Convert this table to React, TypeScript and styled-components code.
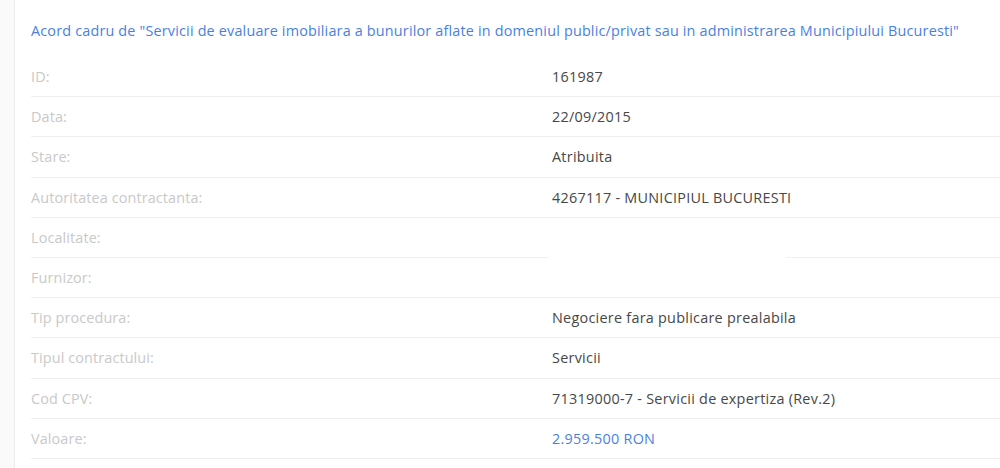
import React from "react";
import styled, { createGlobalStyle } from "styled-components";

const Global = createGlobalStyle`
  html, body { margin: 0; padding: 0; background: #fafafa; }
  body { font-family: "Open Sans", "Noto Sans", "DejaVu Sans", sans-serif; }
`;

const Page = styled.div`
  width: 1000px;
  height: 468px;
  overflow: hidden;
  display: flex;
  background: #fafafa;
`;

const Gutter = styled.div`
  width: 14px;
  flex: none;
`;

const Panel = styled.div`
  flex: 1;
  background: #ffffff;
  border-left: 1px solid #ececec;
  padding: 20px 0 0 16px;
`;

const Title = styled.h1`
  margin: 0 0 15px 0;
  font-size: 14.4px;
  letter-spacing: 0.18px;
  line-height: 22px;
  font-weight: 400;
  color: #4a7fdf;
  white-space: nowrap;
`;

const Grid = styled.div`
  display: grid;
  grid-template-columns: 517px 1fr;
`;

const Cell = styled.div<{ $gapFrom?: number; $gapTo?: number }>`
  height: 39.2px;
  border-bottom: 1px solid #efefef;
  display: flex;
  align-items: center;
  font-size: 14.4px;
  letter-spacing: 0.26px;
  white-space: nowrap;
  ${(p) =>
    p.$gapFrom !== undefined
      ? `background: linear-gradient(#efefef, #efefef) no-repeat left bottom / ${p.$gapFrom}px 1px,
                     linear-gradient(#efefef, #efefef) no-repeat right bottom / calc(100% - ${p.$gapTo}px) 1px;
         height: 40.2px; border-bottom: none;`
      : ""}
`;

const Label = styled(Cell)`
  color: #c9c9c9;
  letter-spacing: 0.12px;
`;

const Value = styled(Cell)<{ $link?: boolean }>`
  padding-left: 4px;
  color: ${(p) => (p.$link ? "#4a7fdf" : "#474747")};
`;

type Row = { label: string; value: string; link?: boolean; gap?: [number, number] };

const rows: Row[] = [
  { label: "ID:", value: "161987" },
  { label: "Data:", value: "22/09/2015" },
  { label: "Stare:", value: "Atribuita" },
  { label: "Autoritatea contractanta:", value: "4267117 - MUNICIPIUL BUCURESTI" },
  { label: "Localitate:", value: "", gap: [0, 238] },
  { label: "Furnizor:", value: "" },
  { label: "Tip procedura:", value: "Negociere fara publicare prealabila" },
  { label: "Tipul contractului:", value: "Servicii" },
  { label: "Cod CPV:", value: "71319000-7 - Servicii de expertiza (Rev.2)" },
  { label: "Valoare:", value: "2.959.500 RON", link: true },
];

export default function App() {
  return (
    <Page>
      <Global />
      <Gutter />
      <Panel>
        <Title>
          Acord cadru de "Servicii de evaluare imobiliara a bunurilor aflate in domeniul public/privat sau in
          administrarea Municipiului Bucuresti"
        </Title>
        <Grid>
          {rows.map((r) => (
            <React.Fragment key={r.label}>
              <Label>{r.label}</Label>
              <Value $link={r.link} $gapFrom={r.gap?.[0]} $gapTo={r.gap?.[1]}>
                {r.value}
              </Value>
            </React.Fragment>
          ))}
        </Grid>
      </Panel>
    </Page>
  );
}
